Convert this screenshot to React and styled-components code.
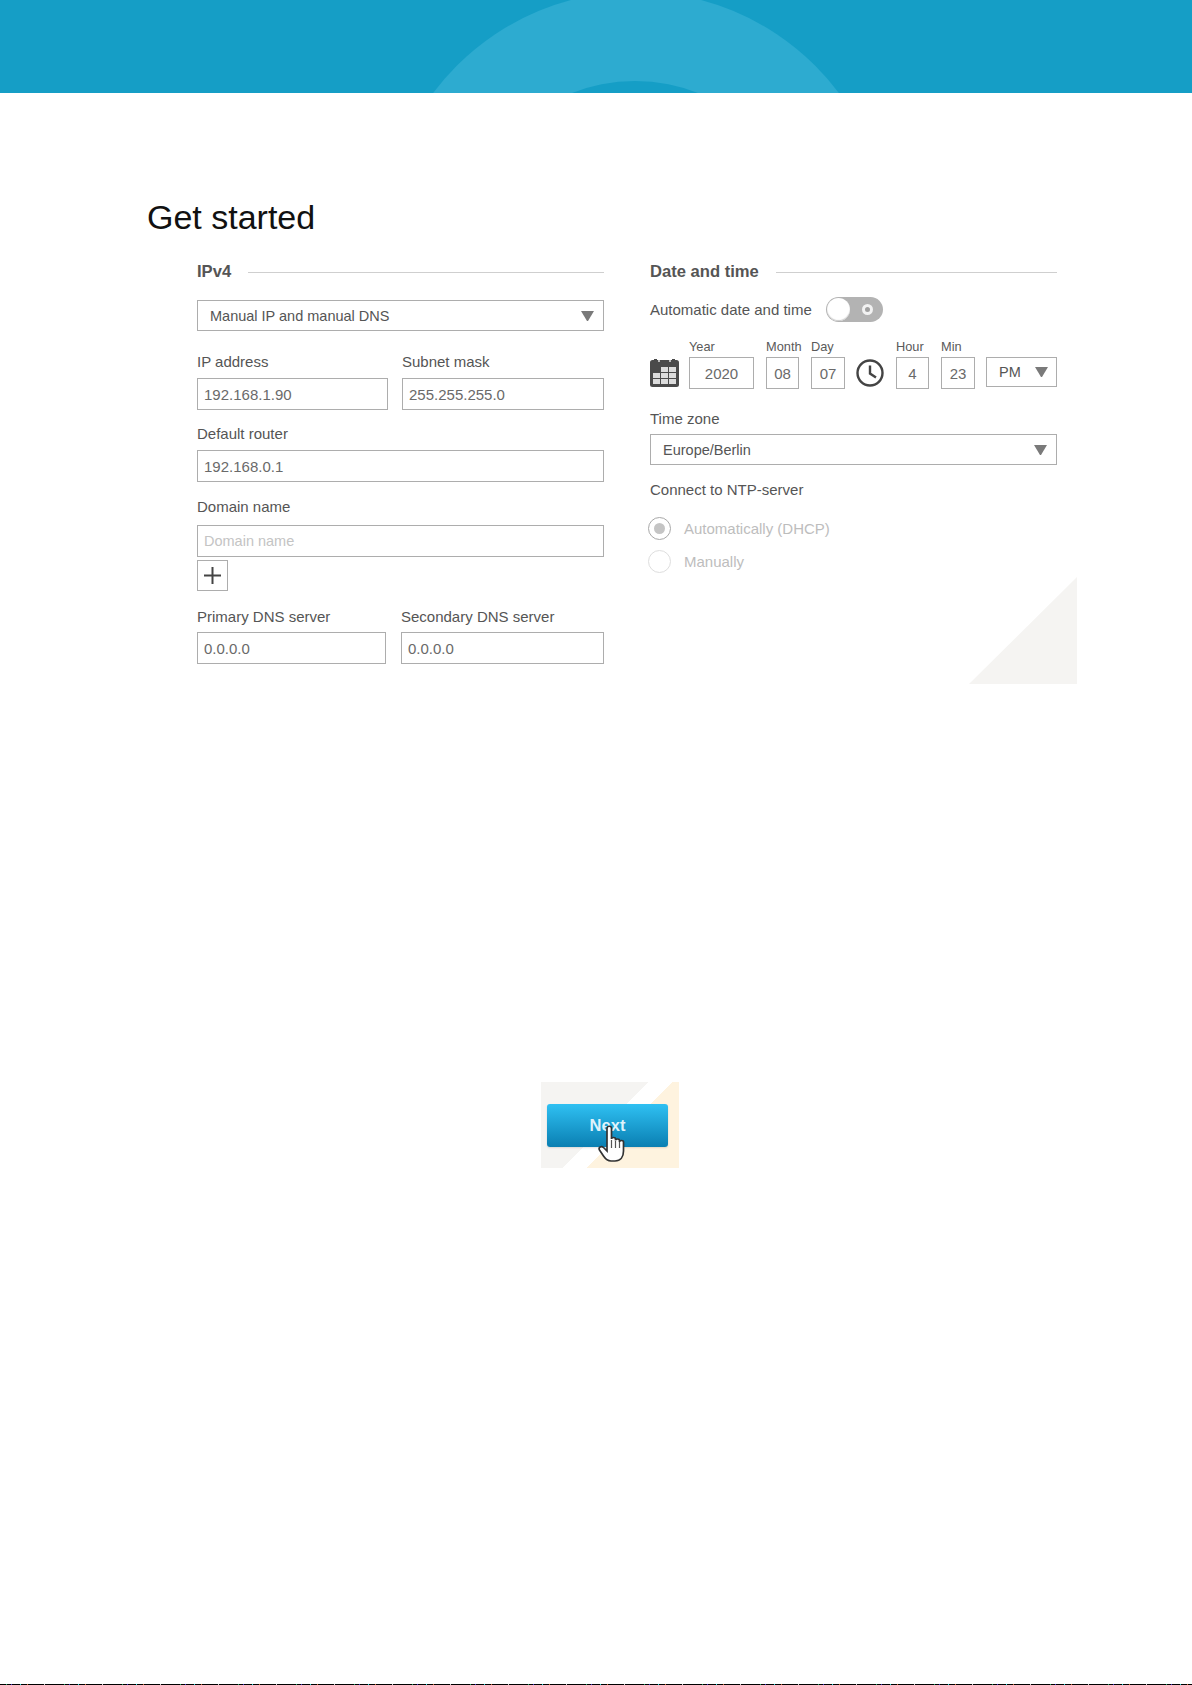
import React from "react";
import styled, { createGlobalStyle } from "styled-components";

const Global = createGlobalStyle`
  html, body { margin: 0; padding: 0; background: #fff; }
  body { font-family: "Liberation Sans", Arial, sans-serif; color: #555; }
  *, *::before, *::after { box-sizing: border-box; }
`;

const Page = styled.div`
  width: 1192px;
  height: 1685px;
  display: flex;
  flex-direction: column;
  background: #fff;
  overflow: hidden;
`;

const Banner = styled.svg`
  display: block;
  width: 1192px;
  height: 93px;
  flex: none;
`;

const Title = styled.h1`
  margin: 104px 0 0 147px;
  font-size: 34px;
  line-height: 40px;
  font-weight: 400;
  color: #111;
  height: 40px;
`;

const Columns = styled.div`
  position: relative;
  margin: 24px 0 0 197px;
  width: 860px;
  display: grid;
  grid-template-columns: 407px 407px;
  column-gap: 46px;
  height: 423px;
`;

const Column = styled.section`
  display: flex;
  flex-direction: column;
  position: relative;
  z-index: 1;
`;

const SectionHead = styled.div`
  display: flex;
  align-items: center;
  gap: 17px;
  height: 22px;
  font-size: 16.6px;
  font-weight: 700;
  color: #555;
  white-space: nowrap;
  &::after {
    content: "";
    flex: 1;
    height: 1px;
    background: #cfcfcf;
    margin-top: 1px;
  }
`;

const Label = styled.div`
  font-size: 15px;
  line-height: 16px;
  color: #555;
  white-space: nowrap;
  margin-top: ${(p) => p.$top ?? 0}px;
  margin-bottom: ${(p) => p.$bottom ?? 0}px;
`;

const Field = styled.div`
  height: 32px;
  width: 100%;
  border: 1px solid #adadad;
  background: #fff;
  display: flex;
  align-items: center;
  padding-left: 6px;
  font-size: ${(p) => (p.$placeholder ? "14.5px" : "15px")};
  color: ${(p) => (p.$placeholder ? "#c4c4c4" : "#6a6a6a")};
  flex: none;
`;

const Select = styled.div`
  height: ${(p) => p.$h ?? 31}px;
  width: ${(p) => (p.$w ? `${p.$w}px` : "100%")};
  border: 1px solid #adadad;
  background: #fff;
  flex: none;
  display: flex;
  align-items: center;
  justify-content: space-between;
  padding: 0 ${(p) => p.$pr ?? 9}px 0 12px;
  font-size: 14.5px;
  color: #555;
  margin-top: ${(p) => p.$top ?? 0}px;
  margin-left: ${(p) => p.$left ?? 0}px;
  margin-bottom: ${(p) => p.$under ?? 0}px;
  &::after {
    content: "";
    width: 13px;
    height: 10px;
    border-left: 6.5px solid transparent;
    border-right: 6.5px solid transparent;
    border-top: 10px solid #7a7a7a;
  }
`;

const Pair = styled.div`
  display: grid;
  grid-template-columns: ${(p) => p.$cols};
  column-gap: ${(p) => p.$gap}px;
  margin-top: ${(p) => p.$top ?? 0}px;
`;

const PlusButton = styled.div`
  width: 31px;
  height: 31px;
  margin-top: 3px;
  border: 1px solid #adadad;
  display: flex;
  align-items: center;
  justify-content: center;
`;

const ToggleRow = styled.div`
  display: flex;
  align-items: center;
  gap: 14px;
  margin-top: 14px;
  height: 25px;
  font-size: 15px;
  color: #555;
  white-space: nowrap;
`;

const Toggle = styled.div`
  width: 57px;
  height: 25px;
  border-radius: 13px;
  background: #b3b3b3;
  position: relative;
  flex: none;
  &::before {
    content: "";
    position: absolute;
    left: 1px;
    top: 1px;
    width: 23px;
    height: 23px;
    border-radius: 50%;
    background: #fff;
    box-shadow: inset 0 -1px 1px #ccc;
  }
  &::after {
    content: "";
    position: absolute;
    right: 10px;
    top: 7px;
    width: 11px;
    height: 11px;
    border-radius: 50%;
    background: #a0a0a0;
    border: 3px solid #f2f2f2;
  }
`;

const DateRow = styled.div`
  display: flex;
  align-items: flex-end;
  margin-top: 18px;
`;

const Part = styled.div`
  display: flex;
  flex-direction: column;
  width: ${(p) => p.$w}px;
  margin-left: ${(p) => p.$left ?? 0}px;
  flex: none;
`;

const SmallLabel = styled.div`
  font-size: 12.8px;
  line-height: 14px;
  height: 17px;
  color: #5a5a5a;
  white-space: nowrap;
`;

const NumberBox = styled.div`
  height: 32px;
  border: 1px solid #adadad;
  display: flex;
  align-items: center;
  justify-content: center;
  font-size: 15px;
  color: #6a6a6a;
`;

const IconSlot = styled.svg`
  display: block;
  flex: none;
  margin-left: ${(p) => p.$left ?? 0}px;
  margin-bottom: 2px;
`;

const Radio = styled.div`
  display: flex;
  align-items: center;
  gap: 13px;
  height: 23px;
  margin-top: ${(p) => p.$top}px;
  margin-left: -2px;
  font-size: 15px;
  color: #bdbdbd;
`;

const RadioDot = styled.span`
  width: 23px;
  height: 23px;
  border-radius: 50%;
  flex: none;
  border: 1.5px solid ${(p) => (p.$on ? "#a8a8a8" : "#dedede")};
  display: flex;
  align-items: center;
  justify-content: center;
  &::after {
    content: "";
    width: 11px;
    height: 11px;
    border-radius: 50%;
    background: ${(p) => (p.$on ? "#c4c4c4" : "transparent")};
  }
`;

const Corner = styled.svg`
  position: absolute;
  right: -20px;
  bottom: 0;
  z-index: 0;
`;

const NextZone = styled.div`
  margin: 398px 0 0 541px;
  width: 138px;
  height: 86px;
  padding: 22px 0 0 6px;
  position: relative;
  background: linear-gradient(
    135deg,
    #f5f4f2 0,
    #f5f4f2 47.8%,
    #fff 47.8%,
    #fff 58.5%,
    #fef3df 58.5%,
    #fef3df 100%
  );
`;

const NextButton = styled.div`
  width: 121px;
  height: 43px;
  border-radius: 3px;
  background: linear-gradient(#2fc0f2, #0a7fb2);
  box-shadow: 0 1px 2px rgba(0, 0, 0, 0.12);
  display: flex;
  align-items: center;
  justify-content: center;
  color: #dff3fb;
  font-weight: 700;
  font-size: 16.5px;
`;

const Hand = styled.svg`
  position: absolute;
  left: 57px;
  top: 43px;
`;

const NoiseLine = styled.div`
  margin-top: auto;
  height: 1px;
  flex: none;
  background: repeating-linear-gradient(
    90deg,
    #000 0,
    #000 6px,
    #2a6 6px,
    #2a6 7px,
    #000 7px,
    #000 11px,
    #43c 11px,
    #43c 12px,
    #000 12px,
    #000 20px,
    #2dd 20px,
    #2dd 21px,
    #000 21px,
    #000 27px,
    #c63 27px,
    #c63 28px,
    #000 28px,
    #000 44px,
    #ccc 44px,
    #ccc 45px,
    #000 45px,
    #000 58px
  );
`;

function Calendar() {
  return (
    <IconSlot width="29" height="28" viewBox="0 0 29 28">
      <rect x="0" y="1" width="29" height="27" rx="2.5" fill="#4a4a4a" />
      <rect x="4" y="0" width="3" height="2" fill="#4a4a4a" />
      <rect x="22" y="0" width="3" height="2" fill="#4a4a4a" />
      <rect x="8" y="1" width="2" height="2" fill="#bbb" />
      <rect x="19" y="1" width="2" height="2" fill="#bbb" />
      {[8, 14, 20].map((y) =>
        [3, 11, 19].map((x) =>
          y === 8 && x === 3 ? null : (
            <rect key={`${x}-${y}`} x={x} y={y} width="7" height="5" fill="#dcdcdc" />
          )
        )
      )}
    </IconSlot>
  );
}

function Clock() {
  return (
    <IconSlot $left={11} width="28" height="28" viewBox="0 0 28 28">
      <circle cx="14" cy="14" r="12.5" fill="none" stroke="#444" strokeWidth="2.4" />
      <path d="M14 6.5V14.5L20 18.5" fill="none" stroke="#444" strokeWidth="2.4" />
    </IconSlot>
  );
}

export default function App() {
  return (
    <Page>
      <Global />
      <Banner viewBox="0 0 1192 93">
        <rect width="1192" height="93" fill="#159ec6" />
        <circle cx="636" cy="245" r="253.5" fill="#2dabd0" />
        <circle cx="635" cy="252" r="171" fill="#159ec6" />
      </Banner>
      <Title>Get started</Title>
      <Columns>
        <Column>
          <SectionHead>IPv4</SectionHead>
          <Select $top={17}>Manual IP and manual DNS</Select>
          <Pair $cols="191px 202px" $gap={14} $top={23}>
            <Label $bottom={8}>IP address</Label>
            <Label $bottom={8}>Subnet mask</Label>
            <Field>192.168.1.90</Field>
            <Field>255.255.255.0</Field>
          </Pair>
          <Label $top={16} $bottom={8}>Default router</Label>
          <Field>192.168.0.1</Field>
          <Label $top={17} $bottom={10}>Domain name</Label>
          <Field $placeholder>Domain name</Field>
          <PlusButton>
            <svg width="19" height="19" viewBox="0 0 19 19">
              <path d="M9.5 1V18M1 9.5H18" stroke="#444" strokeWidth="2" />
            </svg>
          </PlusButton>
          <Pair $cols="189px 203px" $gap={15} $top={18}>
            <Label $bottom={7}>Primary DNS server</Label>
            <Label $bottom={7}>Secondary DNS server</Label>
            <Field>0.0.0.0</Field>
            <Field>0.0.0.0</Field>
          </Pair>
        </Column>
        <Column>
          <SectionHead>Date and time</SectionHead>
          <ToggleRow>
            Automatic date and time
            <Toggle />
          </ToggleRow>
          <DateRow>
            <Calendar />
            <Part $w={65} $left={10}>
              <SmallLabel>Year</SmallLabel>
              <NumberBox>2020</NumberBox>
            </Part>
            <Part $w={33} $left={12}>
              <SmallLabel>Month</SmallLabel>
              <NumberBox>08</NumberBox>
            </Part>
            <Part $w={34} $left={12}>
              <SmallLabel>Day</SmallLabel>
              <NumberBox>07</NumberBox>
            </Part>
            <Clock />
            <Part $w={33} $left={12}>
              <SmallLabel>Hour</SmallLabel>
              <NumberBox>4</NumberBox>
            </Part>
            <Part $w={34} $left={12}>
              <SmallLabel>Min</SmallLabel>
              <NumberBox>23</NumberBox>
            </Part>
            <Select $w={71} $h={30} $pr={8} $left={11} $under={2}>PM</Select>
          </DateRow>
          <Label $top={22} $bottom={7}>Time zone</Label>
          <Select>Europe/Berlin</Select>
          <Label $top={17}>Connect to NTP-server</Label>
          <Radio $top={19}>
            <RadioDot $on />
            Automatically (DHCP)
          </Radio>
          <Radio $top={10}>
            <RadioDot />
            Manually
          </Radio>
        </Column>
        <Corner width="108" height="107" viewBox="0 0 108 107">
          <polygon points="108,0 108,107 0,107" fill="#f5f4f2" />
        </Corner>
      </Columns>
      <NextZone>
        <NextButton>Next</NextButton>
        <Hand width="29" height="38" viewBox="0 0 29 38">
          <path
            d="M9 3.5c0-3 4.5-3 4.5 0V14c0-2 4-2 4 0v1.5c0-2 4-2 4 0V17c0-2 4-2 4 0v9c0 6-3 10-8.500 10H13c-4 0-5.500-2-7.500-5L1.500 25c-1.500-3 2-4.500 4-2.500L9 26z"
            fill="#fff"
            stroke="#333"
            strokeWidth="1.7"
          />
          <path d="M13.500 15v8M17.500 16v7M21.500 17v6" stroke="#555" strokeWidth="1.2" />
        </Hand>
      </NextZone>
      <NoiseLine />
    </Page>
  );
}
